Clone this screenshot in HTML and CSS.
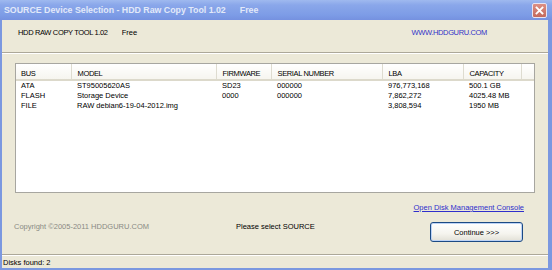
FILE: index.html
```html
<!DOCTYPE html>
<html lang="en">
<head>
<meta charset="UTF-8" />
<title>SOURCE Device Selection - HDD Raw Copy Tool 1.02</title>
<link rel="stylesheet" href="styles.css">
</head>
<body>
<div class="window">
  <div class="titlebar">
    <div class="title">SOURCE Device Selection - HDD Raw Copy Tool 1.02<span class="free">Free</span></div>
    <div class="close">
      <svg width="9" height="9" viewBox="0 0 9 9"><path d="M1.5 1.5 L7.5 7.5 M7.5 1.5 L1.5 7.5" stroke="#fff" stroke-width="1.8" stroke-linecap="square"/></svg>
    </div>
  </div>

  <div class="frame">
    <div class="header">
      <div class="product caps">HDD RAW COPY TOOL 1.02<span class="free">Free</span></div>
      <div class="site caps">WWW.HDDGURU.COM</div>
    </div>

    <div class="list">
      <table>
        <colgroup>
          <col class="c-bus"><col class="c-model"><col class="c-fw"><col class="c-serial"><col class="c-lba"><col class="c-cap"><col>
        </colgroup>
        <thead>
          <tr><th>BUS</th><th>MODEL</th><th>FIRMWARE</th><th>SERIAL NUMBER</th><th>LBA</th><th>CAPACITY</th><th></th></tr>
        </thead>
        <tbody>
          <tr><td>ATA</td><td>ST95005620AS</td><td>SD23</td><td>000000</td><td>976,773,168</td><td>500.1 GB</td><td></td></tr>
          <tr><td>FLASH</td><td>Storage Device</td><td>0000</td><td>000000</td><td>7,862,272</td><td>4025.48 MB</td><td></td></tr>
          <tr><td>FILE</td><td>RAW debian6-19-04-2012.img</td><td></td><td></td><td>3,808,594</td><td>1950 MB</td><td></td></tr>
        </tbody>
      </table>
    </div>

    <div class="links">
      <a href="#">Open Disk Management Console</a>
    </div>

    <div class="actions">
      <div class="copyright">Copyright &copy;2005-2011 HDDGURU.COM</div>
      <div class="message">Please select SOURCE</div>
      <button class="continue">Continue &gt;&gt;&gt;</button>
    </div>

    <div class="status">Disks found: 2</div>
  </div>
</div>
</body>
</html>
```

FILE: styles.css
```css
body {
  margin: 0; padding: 0; background: #fff;
}

.window {
  width: 552px; height: 270px;
  display: flex; flex-direction: column;
  font-family: "Liberation Sans", Arial, sans-serif; font-size: 7.5px; color: #000;
  overflow: hidden;
}

/* mayusculas algo mas estrechas, como Tahoma */
.caps, th { letter-spacing: -0.35px; }

/* barra de titulo (ventana inactiva XP) */
.titlebar {
  height: 20px; flex: none;
  display: flex; align-items: center; justify-content: space-between;
  padding: 0 5px 0 4px;
  background: linear-gradient(#9fb9ef, #8aa7ea 25%, #7d9ce6 75%, #7591e0);
  color: #e2e9f9; font-weight: bold; font-size: 8.8px;
}
.titlebar .free { margin-left: 14px; }
.close {
  width: 13px; height: 13px;
  display: flex; align-items: center; justify-content: center;
  background: linear-gradient(#dc8f84, #c46a5c);
  border: 1px solid #e8e4f2; border-radius: 2px;
  margin-top: 1px;
}

.frame {
  flex: 1; display: flex; flex-direction: column;
  background: #ece9d8;
  border: 0 solid #7b98e0; border-width: 0 4px 2px 2px;
}

.header {
  height: 24px; padding: 8px 0 0 16px;
  display: flex; align-items: flex-start;
  line-height: 10px;
  border-bottom: 1px solid #aca899;
  box-shadow: 0 1px 0 #fff;
}
.header .free { margin-left: 14px; letter-spacing: 0; }
.site { margin-left: auto; margin-right: 61px; color: #3333c8; }

/* lista de discos */
.list {
  margin: 10px 13px 0 13px; height: 128px;
  background: #fff;
  border: 1px solid #a7a6a0;
}
table {
  width: 100%; border-collapse: collapse; table-layout: fixed;
}
.c-bus { width: 55px; }
.c-model { width: 145px; }
.c-fw { width: 55px; }
.c-serial { width: 111px; }
.c-lba { width: 81px; }
.c-cap { width: 58px; }
th {
  height: 10px; padding: 5px 0 0 6px;
  font-weight: normal; text-align: left; line-height: 10px;
  background: linear-gradient(#fff, #f6f5ef);
  border-right: 1px solid #dedcd0;
  border-bottom: 2px solid #dcd9cb;
  white-space: nowrap;
}
th:first-child, td:first-child { padding-left: 5px; }
th:last-child { border-right: none; }
td {
  height: 10px; padding: 0 0 0 6px; line-height: 10px;
  white-space: nowrap; overflow: hidden;
}

.links {
  display: flex; justify-content: flex-end;
  margin-top: 10px; padding-right: 24px; line-height: 10px;
}
.links a { color: #2f2fcc; text-decoration: underline; }

.actions {
  display: flex; align-items: flex-start;
  margin-top: 9px; padding-left: 12px; line-height: 10px;
}
.copyright { width: 222px; color: #8a8a84; }
.message { flex: 1; }
.continue {
  width: 93px; height: 20px; margin-right: 25px; padding: 0;
  font-family: inherit; font-size: 7.5px; color: #000;
  border: 1px solid #1c4a84; border-radius: 3px;
  background: linear-gradient(#fff, #f5f4ee 60%, #e2e0d6);
  box-shadow: inset 0 0 0 1px #bcd3f6;
}

.status {
  flex: 1; margin-top: 12px; padding: 3px 0 0 1px; line-height: 10px;
  border-top: 1px solid #aca899;
  box-shadow: inset 0 1px 0 #fff;
}
```
